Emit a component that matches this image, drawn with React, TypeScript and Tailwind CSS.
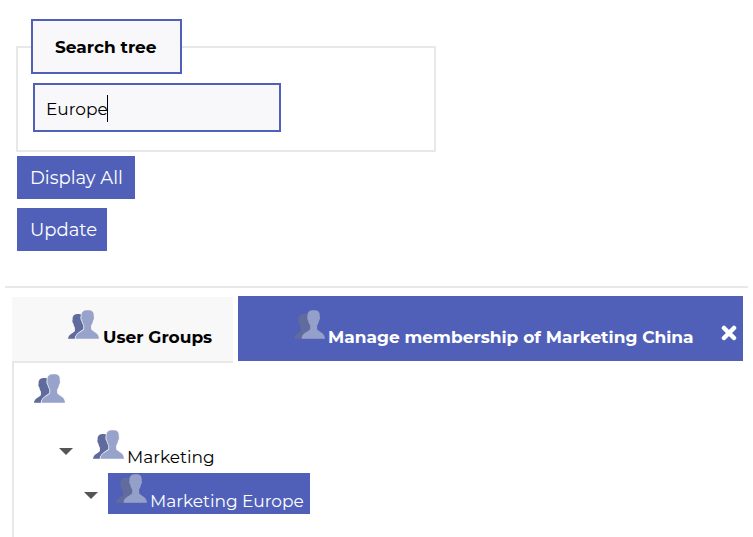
import { useState } from "react";

function GroupIcon({ active = false }: { active?: boolean }) {
  return (
    <svg viewBox="0 0 94 87" className="h-[29px] w-[31px] shrink-0" aria-hidden="true">
      <path
        d="M32 12C19 12 13 17 14 30c-2 3 0 8 2 10 1 6 3 10 5 13v10C17 70 1 72 0 87h44l10-60C51 17 44 12 32 12z"
        fill={active ? "#626c9c" : "#5f6a9d"}
      />
      <path
        d="M60 0C46 0 40 5 41 20c-2 3 0 9 2 11 1 7 3 11 6 15v12c-6 9-25 10-26 29h71c-1-19-18-20-24-29V46c3-4 5-8 6-15 2-2 4-8 2-11C79 5 74 0 60 0z"
        fill={active ? "#95a0ca" : "#98a3cb"}
        stroke={active ? "none" : "#f4f5fa"}
        strokeWidth="5"
        paintOrder="stroke"
      />
    </svg>
  );
}

function Arrow() {
  return (
    <svg viewBox="0 0 14 7" className="h-[7px] w-[14px]" aria-hidden="true">
      <path d="M0 0h14L7 7z" fill="#555" />
    </svg>
  );
}

export default function App() {
  const [query, setQuery] = useState("Europe");
  const [open, setOpen] = useState(true);

  return (
    <main className="min-h-screen bg-white px-[5px] pt-[19px] font-['Montserrat','Inter',sans-serif] text-[17px] leading-7 text-black">
      <form className="px-[11px]" onSubmit={(e) => e.preventDefault()}>
        <fieldset className="w-full max-w-[420px] border-2 border-[#e8e8e8] px-[13px] pb-[18px]">
          <legend className="border-2 border-[#5060b9] bg-[#f8f8fb] pl-[22px] pr-[23px] pb-[11px] pt-[13px] font-bold leading-[27px]">
            <label htmlFor="search">Search tree</label>
          </legend>
          <div className="relative ml-0.5 mt-[9px] w-[248px]">
            <input
              id="search"
              type="text"
              value={query}
              onChange={(e) => setQuery(e.target.value)}
              className="block h-[49px] w-full border-2 border-[#5060b9] bg-[#f8f8fb] px-[11px] pt-[3px] outline-none"
            />
            <span className="absolute left-[74px] top-3 h-[27px] w-px bg-black" />
          </div>
        </fieldset>
        <div className="ml-px mt-1 flex flex-col items-start gap-[9px] text-lg text-white">
          <button type="button" className="h-[43px] bg-[#5060b9] pl-[13px] pr-3">
            Display All
          </button>
          <button type="submit" className="h-[43px] bg-[#5060b9] pl-[13px] pr-[10px]">
            Update
          </button>
        </div>
      </form>

      <hr className="mt-[35px] border-t-2 border-[#e8e8e8]" />

      <section className="ml-[7px] mr-[5px] mt-2">
        <div className="flex items-start gap-[5px]">
          <button
            type="button"
            className="mt-px flex h-[66px] w-[221px] shrink-0 items-start border-b-2 border-[#e8e8e8] bg-[#f8f8f8] pl-14 pt-[13px] font-bold"
          >
            <GroupIcon />
            <span className="ml-1 mt-[13px]">User Groups</span>
          </button>
          <div className="flex h-[65px] flex-1 items-start justify-between bg-[#5060b9] pl-14 pr-1.5 pt-[14px] font-bold text-white">
            <button type="button" className="flex items-start whitespace-nowrap">
              <GroupIcon active />
              <span className="ml-[3px] mt-[13px]">Manage membership of Marketing China</span>
            </button>
            <button type="button" aria-label="Close" className="mt-[15px]">
              <svg viewBox="0 0 16 16" className="h-4 w-4">
                <path d="M3 3l10 10M13 3L3 13" stroke="#fff" strokeWidth="4.5" strokeLinecap="round" />
              </svg>
            </button>
          </div>
        </div>

        <div className="min-h-[174px] border-l-2 border-[#e8e8e8] pl-5 pt-[11px]">
          <GroupIcon />
          <ul className="pl-[25px] pt-[27px]">
            <li>
              <div className="flex items-start">
                <button
                  type="button"
                  aria-label="Toggle Marketing"
                  className="mt-[18px] leading-none"
                  onClick={() => setOpen(!open)}
                >
                  <Arrow />
                </button>
                <a href="#marketing" className="ml-5 flex items-start">
                  <GroupIcon />
                  <span className="ml-[3px] mt-[13px]">Marketing</span>
                </a>
              </div>
              {open ? (
                <ul className="pl-[25px] pt-0.5">
                  <li className="flex items-start">
                    <button type="button" aria-label="Toggle Marketing Europe" className="mt-[19px] leading-none">
                      <Arrow />
                    </button>
                    <a
                      href="#marketing-europe"
                      className="ml-[10px] flex h-[41px] items-start bg-[#5060b9] pl-2 pr-1.5 pt-px text-white"
                    >
                      <GroupIcon active />
                      <span className="ml-[3px] mt-[13px]">Marketing Europe</span>
                    </a>
                  </li>
                </ul>
              ) : null}
            </li>
          </ul>
        </div>
      </section>
    </main>
  );
}
